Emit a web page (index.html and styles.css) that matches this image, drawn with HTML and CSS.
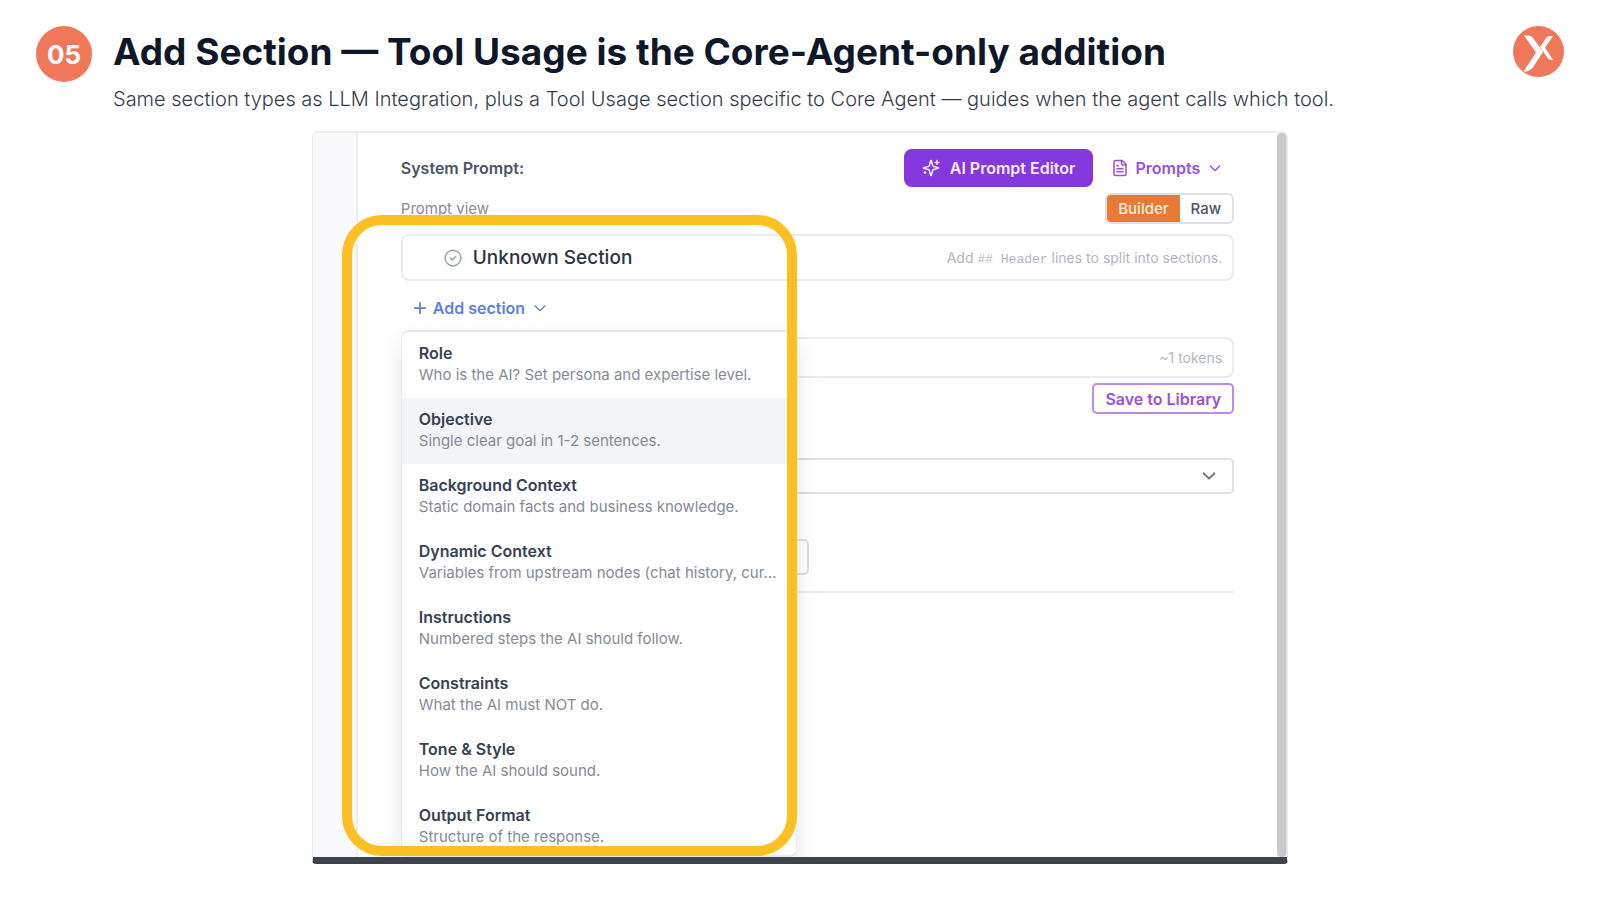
FILE: index.html
```html
<!DOCTYPE html>
<html lang="en">
<head>
<meta charset="utf-8">
<title>Add Section — Tool Usage</title>
<link rel="stylesheet" href="styles.css">
</head>
<body>
<div class="slide">
  <header class="slide-header">
    <span class="step">05</span>
    <div class="headings">
      <h1 class="title">Add Section — Tool Usage is the Core-Agent-only addition</h1>
      <p class="subtitle">Same section types as LLM Integration, plus a Tool Usage section specific to Core Agent — guides when the agent calls which tool.</p>
    </div>
    <svg class="logo" viewBox="0 0 51 51" aria-label="Logo" role="img">
      <circle cx="25.500" cy="25.500" r="25.500" fill="#f0785a"/>
      <path d="M11 9.500H15.500Q18.500 9.500 20.500 12.500L30 26L20.500 40.500Q16.500 46.500 10.500 45.500L23 26.500Z" fill="#fff"/>
      <path d="M40 10H37Q34.500 10 33 12L27 21L34 31Q36 34.500 40 34L32 21.500Z" fill="#fff"/>
    </svg>
  </header>

  <main class="shot">
    <div class="gutter"></div>
    <div class="editor">
      <div class="row prompt-row">
        <h2 class="prompt-label">System Prompt:</h2>
        <div class="prompt-actions">
          <button class="btn-primary" type="button">
            <svg class="icon" viewBox="0 0 24 24"><path d="M9.900 15.500A2 2 0 0 0 8.500 14.100L2.400 12.500a.5.5 0 0 1 0-1L8.500 9.900A2 2 0 0 0 9.900 8.500l1.600-6.100a.5.5 0 0 1 1 0l1.600 6.100a2 2 0 0 0 1.400 1.400l6.100 1.600a.5.5 0 0 1 0 1l-6.100 1.600a2 2 0 0 0-1.400 1.400l-1.600 6.100a.5.5 0 0 1-1 0z"/><path d="M20 2v5M22.500 4.500h-5M4 17v2M5 18H3"/></svg>
            AI Prompt Editor
          </button>
          <button class="btn-text" type="button">
            <svg class="icon" viewBox="0 0 24 24"><path d="M15 2H6a2 2 0 0 0-2 2v16a2 2 0 0 0 2 2h12a2 2 0 0 0 2-2V7z"/><path d="M14 2v4a2 2 0 0 0 2 2h4M10 9H8M16 13H8M16 17H8"/></svg>
            Prompts
            <svg class="icon chevron" viewBox="0 0 24 24"><path d="M5 9l7 7 7-7"/></svg>
          </button>
        </div>
      </div>

      <div class="row view-row">
        <span class="view-label">Prompt view</span>
        <div class="toggle">
          <button class="toggle-item active" type="button">Builder</button>
          <button class="toggle-item" type="button">Raw</button>
        </div>
      </div>

      <section class="row card section-card">
        <div class="section-name">
          <svg class="icon" viewBox="0 0 24 24"><circle cx="12" cy="12" r="10.500"/><path d="M8.500 12l2.500 2.500 4.500-4.500"/></svg>
          <h3 class="section-title">Unknown Section</h3>
        </div>
        <span class="hint">Add <code class="code">## Header</code> lines to split into sections.</span>
      </section>

      <div class="add-wrap">
        <button class="add" type="button">
          <svg class="icon plus" viewBox="0 0 24 24"><path d="M12 3v18M3 12h18"/></svg>
          Add section
          <svg class="icon chevron" viewBox="0 0 24 24"><path d="M5 9l7 7 7-7"/></svg>
        </button>
        <ul class="menu">
          <li><button class="option" type="button"><span class="name">Role</span><span class="desc">Who is the AI? Set persona and expertise level.</span></button></li>
          <li><button class="option hovered" type="button"><span class="name">Objective</span><span class="desc">Single clear goal in 1-2 sentences.</span></button></li>
          <li><button class="option" type="button"><span class="name">Background Context</span><span class="desc">Static domain facts and business knowledge.</span></button></li>
          <li><button class="option" type="button"><span class="name">Dynamic Context</span><span class="desc">Variables from upstream nodes (chat history, cur…</span></button></li>
          <li><button class="option" type="button"><span class="name">Instructions</span><span class="desc">Numbered steps the AI should follow.</span></button></li>
          <li><button class="option" type="button"><span class="name">Constraints</span><span class="desc">What the AI must NOT do.</span></button></li>
          <li><button class="option" type="button"><span class="name">Tone &amp; Style</span><span class="desc">How the AI should sound.</span></button></li>
          <li><button class="option last" type="button"><span class="name">Output Format</span><span class="desc">Structure of the response.</span></button></li>
        </ul>
      </div>

      <div class="card tokens">~1 tokens</div>
      <button class="save" type="button">Save to Library</button>
      <div class="select-wrap">
        <select class="select" aria-label="Library prompt"><option></option></select>
        <svg class="icon select-arrow" viewBox="0 0 24 24"><path d="M4 8l8 8 8-8"/></svg>
      </div>
      <input class="field" type="text" aria-label="Value">
      <hr class="rule">
    </div>
    <div class="scrollbar"></div>
    <div class="highlight"></div>
  </main>
</div>
</body>
</html>
```
FILE: styles.css
```css
* { box-sizing: border-box; }

body {
  margin: 0;
  background: #fff;
  color: #0f172a;
  font-family: Inter, "Liberation Sans", sans-serif;
}

h1, h2, h3, p, ul { margin: 0; padding: 0; }
ul { list-style: none; }

button {
  padding: 0;
  border: 0;
  background: none;
  font: inherit;
  color: inherit;
  cursor: pointer;
}

.icon {
  flex: none;
  width: 18px;
  height: 18px;
  fill: none;
  stroke: currentColor;
  stroke-width: 2;
  stroke-linecap: round;
  stroke-linejoin: round;
}
.chevron { width: 16px; height: 16px; margin-left: 1px; }

.slide {
  display: flex;
  flex-direction: column;
  min-height: 100vh;
  padding: 26px 36px 36px;
}

.slide-header {
  display: flex;
  align-items: flex-start;
  gap: 21px;
  margin-bottom: 17px;
}
.step {
  display: grid;
  place-items: center;
  flex: none;
  width: 56px;
  height: 56px;
  border-radius: 50%;
  background: #f0785a;
  color: #fff;
  font-size: 26px;
  font-weight: 700;
}
.headings { flex: 1; }
.title {
  font-size: 37px;
  line-height: 52px;
  font-weight: 700;
}
.subtitle {
  padding-top: 6px;
  color: #363d4a;
  font-size: 20px;
  font-weight: 300;
  line-height: 30px;
}
.logo { flex: none; width: 51px; height: 51px; }

.shot {
  position: relative;
  display: flex;
  flex: 1;
  align-self: center;
  width: 63.9%;
  overflow: hidden;
  border: 1px solid #ececf0;
  border-top-width: 2px;
  border-bottom: 7px solid #3d434d;
  border-radius: 6px 6px 4px 4px;
}
.gutter {
  width: 45px;
  border-right: 2px solid #ededf1;
  background: #f9f9fc;
}
.editor { flex: 1; padding: 16px 43px 0; color: #374151; }
.scrollbar {
  width: 10px;
  border-right: 1px solid #e5e5ea;
  border-radius: 4px;
  background: #c9c9c9;
}

.row {
  display: flex;
  align-items: center;
  justify-content: space-between;
}
.prompt-label { font-size: 16px; font-weight: 600; color: #4b5563; }
.prompt-actions { display: flex; align-items: center; gap: 18px; }
.btn-primary {
  display: flex;
  align-items: center;
  gap: 10px;
  height: 38px;
  padding: 0 18px;
  border-radius: 8px;
  background: #8638df;
  color: #f5ebff;
  font-size: 16px;
  font-weight: 600;
}
.btn-text {
  display: flex;
  align-items: center;
  gap: 6px;
  padding-right: 11px;
  color: #9850e0;
  font-size: 16px;
  font-weight: 600;
}

.view-row { margin: 6px 0 10px; }
.view-label { color: #858b96; font-size: 15px; }
.toggle {
  display: flex;
  height: 31px;
  overflow: hidden;
  border: 2px solid #dfe1e6;
  border-radius: 6px;
  font-size: 15px;
  font-weight: 500;
  color: #4b5563;
}
.toggle-item { padding: 0 11px; }
.toggle-item.active { background: #e87a35; color: #fdeadd; }

.card {
  border: 2px solid #ebecef;
  border-radius: 8px;
}
.section-card { height: 47px; padding: 0 10px 0 41px; }
.section-name { display: flex; align-items: center; gap: 11px; color: #9ca3af; }
.section-title { color: #2b3340; font-size: 19px; font-weight: 500; }
.hint { color: #b0b5be; font-size: 14px; }
.code { font-family: "Liberation Mono", monospace; font-size: 13px; }

.add-wrap { position: relative; height: 56px; padding: 15px 12px 0; }
.add {
  display: flex;
  align-items: center;
  gap: 6px;
  height: 24px;
  color: #5f7fe0;
  font-size: 16px;
  font-weight: 600;
}
.plus { width: 14px; height: 14px; stroke-width: 3; }

.menu {
  position: absolute;
  z-index: 1;
  top: 49px;
  left: 0;
  width: 396px;
  border: 2px solid #e8e9ed;
  border-width: 2px 1px;
  border-radius: 8px;
  background: #fff;
  box-shadow: 0 12px 24px rgba(17, 24, 39, 0.1);
}
.option {
  display: block;
  width: 100%;
  padding: 10px 16px 12px 17px;
  text-align: left;
}
.option.hovered { background: #f3f4f6; }
.option.last { padding-bottom: 7px; }
.name, .desc { display: block; line-height: 22px; }
.name { color: #374151; font-size: 16px; font-weight: 600; }
.desc {
  color: #858b96;
  font-size: 15px;
  white-space: nowrap;
}

.tokens {
  height: 41px;
  padding: 0 10px;
  color: #b0b5be;
  font-size: 14px;
  line-height: 37px;
  text-align: right;
}
.save {
  display: block;
  height: 31px;
  margin: 5px 0 44px auto;
  padding: 0 11px;
  border: 2px solid #be8aee;
  border-radius: 5px;
  color: #9850e0;
  font-size: 16px;
  font-weight: 600;
}
.select-wrap { position: relative; color: #6b7280; }
.select {
  display: block;
  width: 100%;
  height: 36px;
  appearance: none;
  border: 2px solid #dfe1e6;
  border-radius: 5px;
  background: #fff;
}
.select-arrow {
  position: absolute;
  top: 10px;
  right: 17px;
  width: 16px;
  height: 16px;
  stroke-width: 3;
  pointer-events: none;
}
.field {
  display: block;
  width: 49%;
  height: 36px;
  margin: 45px 0 16px;
  border: 2px solid #dfe1e6;
  border-radius: 5px;
}
.rule { margin: 0; border: 0; border-top: 2px solid #ededf0; }

.highlight {
  position: absolute;
  z-index: 2;
  top: 82px;
  bottom: 1px;
  left: 29px;
  width: 455px;
  border: 10px solid #fcbf24;
  border-radius: 40px;
  pointer-events: none;
}
```
